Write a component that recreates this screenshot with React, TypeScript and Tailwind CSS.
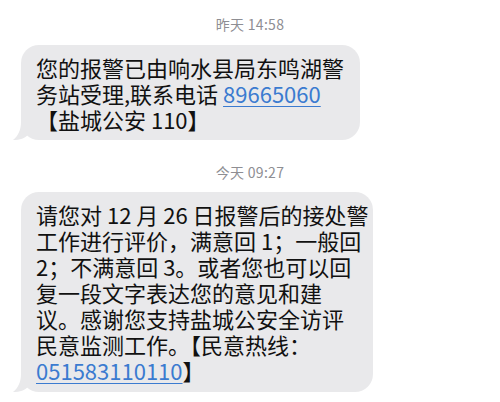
const FONT = "font-['Noto_Sans_CJK_SC','Noto_Sans',sans-serif]";

function Stamp({text, className}: {text: string; className: string}) {
  return (
    <div className={`text-center text-[14px] leading-[16px] tracking-[0.3px] text-[#8e8e93] ${className}`}>{text}</div>
  );
}

function Tail() {
  return (
    <svg
      className="absolute left-[-9px] bottom-0"
      width="24"
      height="18"
      viewBox="0 0 24 18"
      aria-hidden
    >
      <path d="M9 0 C9 8 6 14 1 18 C8 18 13 16 16 13 L24 13 L24 0 Z" fill="#e9e9eb" />
    </svg>
  );
}

function Bubble({className, children}: {className: string; children: React.ReactNode}) {
  return (
    <div
      className={`relative ml-[21px] rounded-[18px] bg-[#e9e9eb] px-[15px] text-[22px] leading-[26px] text-[#111] whitespace-nowrap ${className}`}
    >
      {children}
      <Tail />
    </div>
  );
}

const Link = ({children}: {children: React.ReactNode}) => (
  <span className="text-[#3b7bd0] underline decoration-1 underline-offset-[3px]">{children}</span>
);

export default function App() {
  return (
    <div className={`w-[500px] h-[402px] overflow-hidden bg-white ${FONT}`}>
      <Stamp text="昨天 14:58" className="pt-[16px]" />
      <Bubble className="mt-[13px] w-[339px] pt-[9px] pb-[8px]">
        <div>您的报警已由响水县局东鸣湖警</div>
        <div>
          务站受理,联系电话 <Link>89665060</Link>
        </div>
        <div>【盐城公安 110】</div>
      </Bubble>

      <Stamp text="今天 09:27" className="mt-[24px]" />
      <Bubble className="mt-[12px] w-[352px] py-[9px]">
        <div>请您对 12 月 26 日报警后的接处警</div>
        <div>工作进行评价，满意回 1；一般回</div>
        <div>2；不满意回 3。或者您也可以回</div>
        <div>复一段文字表达您的意见和建</div>
        <div>议。感谢您支持盐城公安全访评</div>
        <div>民意监测工作。【民意热线：</div>
        <div>
          <Link>051583110110</Link>】
        </div>
      </Bubble>
    </div>
  );
}
